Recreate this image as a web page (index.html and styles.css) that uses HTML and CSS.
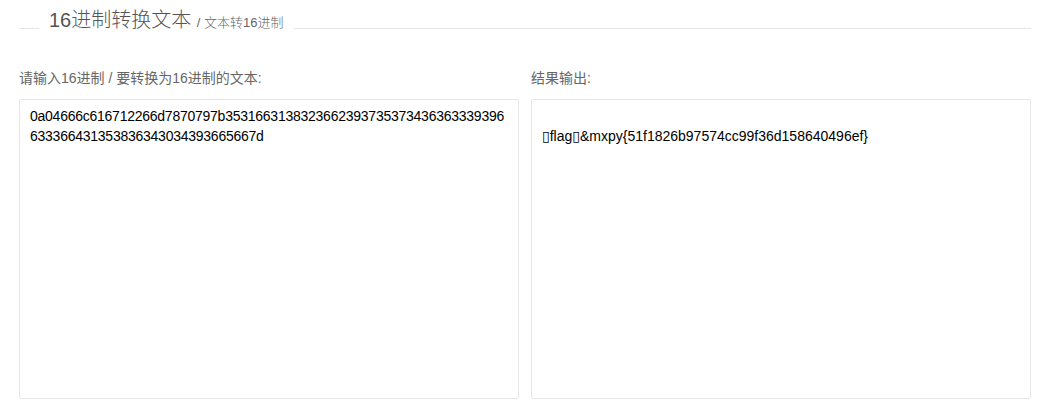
FILE: index.html
```html
<!DOCTYPE html>
<html lang="zh-CN">
<head>
  <meta charset="UTF-8" />
  <title>16进制转换文本</title>
  <link rel="stylesheet" href="styles.css">
</head>
<body>
  <div class="wrap">
    <fieldset class="field-title">
      <legend><span class="legend-text">16进制转换文本 <small>/ 文本转16进制</small></span></legend>
    </fieldset>

    <div class="cols">
      <div class="col">
        <label class="label">请输入16进制 / 要转换为16进制的文本:</label>
        <textarea class="area area-hex">0a04666c616712266d7870797b3531663138323662393735373436363339396633366431353836343034393665667d</textarea>
      </div>
      <div class="col">
        <label class="label">结果输出:</label>
        <textarea class="area">&#10;&#10;▯flag▯&amp;mxpy{51f1826b97574cc99f36d158640496ef}</textarea>
      </div>
    </div>
  </div>
</body>
</html>
```

FILE: styles.css
```css
body {
  margin: 0;
  padding: 0;
  background: #fff;
  font-family: "Liberation Sans", "Noto Sans CJK SC", sans-serif;
  color: #666;
  font-size: 14px;
}

.wrap {
  padding: 14px 17px 0 19px;
}

.field-title {
  margin: 0;
  padding: 0;
  border: 0;
  border-top: 1px solid #e6e6e6;
  min-width: 0;
}

.field-title legend {
  margin-left: 20px;
  padding: 0 10px;
  font-size: 20px;
  font-weight: 300;
  line-height: 26px;
  color: #555;
}

/* text sits a little above the rule */
.legend-text {
  position: relative;
  top: -7px;
}

.field-title legend small {
  font-size: 13px;
  color: #666;
}

.cols {
  display: grid;
  grid-template-columns: 1fr 1fr;
  gap: 12px;
  margin-top: 25px;
}

.col {
  display: flex;
  flex-direction: column;
}

.label {
  font-size: 14px;
  line-height: 20px;
  color: #666;
  margin-bottom: 11px;
}

.area {
  box-sizing: border-box;
  height: 300px;
  padding: 6px 10px;
  border: 1px solid #e6e6e6;
  border-radius: 2px;
  font-family: "Liberation Sans", "DejaVu Sans", "Noto Sans CJK SC", sans-serif;
  font-size: 14px;
  line-height: 20px;
  color: #000;
  resize: none;
  outline: none;
  word-break: break-all;
}

.area-hex {
  letter-spacing: -0.25px;
}
```
